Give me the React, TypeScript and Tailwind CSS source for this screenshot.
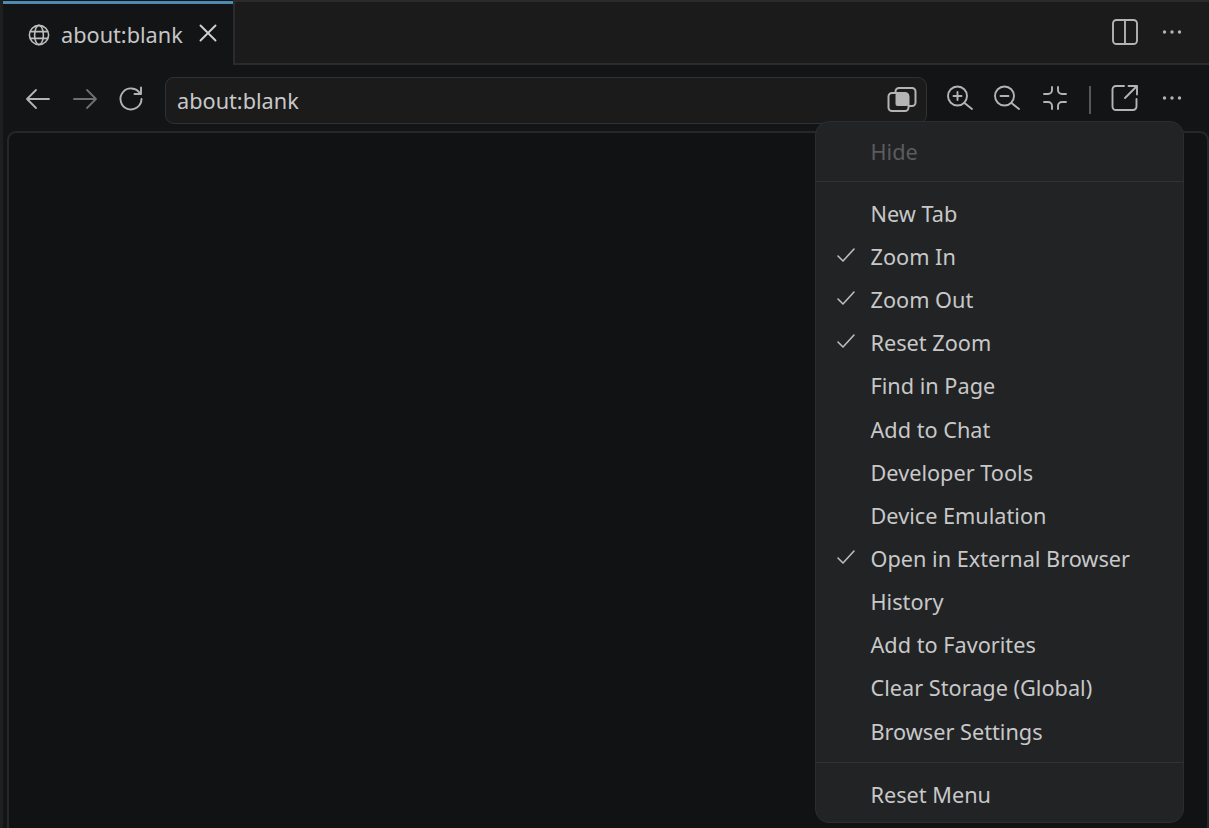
function Icon({ children, className = "" }: { children: React.ReactNode; className?: string }) {
  return (
    <svg viewBox="0 0 32 32" fill="none" stroke="currentColor" strokeWidth="1.9" strokeLinecap="round" strokeLinejoin="round" className={"w-8 h-8 shrink-0 " + className}>
      {children}
    </svg>
  );
}
function Dots({ className = "" }: { className?: string }) {
  return (
    <svg viewBox="0 0 32 32" fill="currentColor" className={"w-8 h-8 shrink-0 text-[#b4b4b4] " + className}>
      <circle cx="8.500" cy="16" r="1.700" />
      <circle cx="16" cy="16" r="1.700" />
      <circle cx="23.500" cy="16" r="1.700" />
    </svg>
  );
}
function Check() {
  return (
    <svg viewBox="0 0 20 16" fill="none" stroke="#bdbdbd" strokeWidth="1.600" strokeLinecap="round" strokeLinejoin="round" className="w-5 h-4 shrink-0 -mt-1">
      <path d="M2 9l5 5L18 2" />
    </svg>
  );
}
function Row({ label, checked }: { label: string; checked?: boolean }) {
  return (
    <div className="flex items-center h-[43.17px] pl-5">
      <div className="w-[34.5px] flex items-center">{checked ? <Check /> : null}</div>
      <span>{label}</span>
    </div>
  );
}
const items: [string, boolean][] = [
  ["New Tab", false],
  ["Zoom In", true],
  ["Zoom Out", true],
  ["Reset Zoom", true],
  ["Find in Page", false],
  ["Add to Chat", false],
  ["Developer Tools", false],
  ["Device Emulation", false],
  ["Open in External Browser", true],
  ["History", false],
  ["Add to Favorites", false],
  ["Clear Storage (Global)", false],
  ["Browser Settings", false],
];
export default function App() {
  return (
    <div className="relative w-[1209px] h-[828px] overflow-hidden bg-[#131415] text-[#c8c8c8] text-[21.7px] font-['Noto_Sans','Open_Sans',sans-serif] leading-none flex flex-col pl-[3px]">
      <div className="absolute left-0 top-0 bottom-0 w-[3px] bg-[#1e1f20]" />
      <div className="h-[65px] flex shrink-0">
        <div className="w-[230px] h-[64px] mt-[1px] border-t-[3px] border-t-[#4f8ab3] bg-[#131415] flex items-center pl-[24.5px] shrink-0">
          <svg viewBox="0 0 22 22" fill="none" stroke="#bebebe" strokeWidth="1.600" className="w-[22px] h-[22px] shrink-0">
            <circle cx="11" cy="11" r="9.600" />
            <ellipse cx="11" cy="11" rx="4.400" ry="9.600" />
            <path d="M2 7.600h18M2 14.400h18" />
          </svg>
          <span className="ml-[11.5px] mt-[1px] text-[#c6c6c6]">about:blank</span>
          <svg viewBox="0 0 18 18" fill="none" stroke="#d0d0d0" strokeWidth="1.900" strokeLinecap="round" className="w-[18px] h-[18px] ml-[16px] -mt-1">
            <path d="M1.500 1.500l15 15M16.500 1.500l-15 15" />
          </svg>
        </div>
        <div className="flex-1 bg-[#1b1b1c] border-t-[2px] border-t-[#2a2b2c] border-l-[2px] border-l-[#2a2b2c] border-b-[2px] border-b-[#2a2b2c] flex items-center justify-end pr-[21px] gap-[15px]">
          <Icon className="text-[#b4b4b4] -mt-0.5">
            <rect x="4" y="4" width="24" height="24" rx="3.500" />
            <path d="M16 4v24" />
          </Icon>
          <Dots className="-mt-0.5" />
        </div>
      </div>
      <div className="h-[66px] flex items-center shrink-0 pl-[19px] pr-[20px] pt-[4px]">
        <Icon className="text-[#b4b4b4] -mt-1">
          <path d="M5 17h22M14 8l-9 9 9 9" strokeWidth="1.800" />
        </Icon>
        <Icon className="text-[#6f6f6f] ml-[15px] -mt-1">
          <path d="M5 17h22M18 8l9 9-9 9" strokeWidth="1.800" />
        </Icon>
        <Icon className="text-[#b4b4b4] ml-[15px] -mt-1">
          <path d="M24 11.500A10.500 10.500 0 1 0 25.500 17" />
          <path d="M25 5.500v6.500h-6.500" />
        </Icon>
        <div className="ml-[17px] w-[762px] h-[47px] rounded-[9px] border border-[#303132] bg-[#1b1b1c] flex items-center pl-[11px] pr-[8px] justify-between">
          <span className="text-[#c8c8c8] mt-[1px]">about:blank</span>
          <svg viewBox="0 0 32 32" fill="none" stroke="#b4b4b4" strokeWidth="2" className="w-8 h-8 -mt-0.5">
            <rect x="9.500" y="5" width="20" height="18" rx="3.500" />
            <rect x="2.500" y="10" width="20" height="18" rx="3.500" fill="#1b1b1c" />
            <rect x="9.500" y="10" width="13" height="13" rx="2" fill="#b4b4b4" stroke="none" />
          </svg>
        </div>
        <Icon className="text-[#b4b4b4] ml-[17px] -mt-1">
          <circle cx="13.500" cy="14" r="9.500" />
          <path d="M20.500 21L28 27M13.500 10v8M9.500 14h8" />
        </Icon>
        <Icon className="text-[#b4b4b4] ml-[15px] -mt-1">
          <circle cx="13.500" cy="14" r="9.500" />
          <path d="M20.500 21L28 27M9.500 14h8" />
        </Icon>
        <Icon className="text-[#b4b4b4] ml-[16px] -mt-1">
          <path d="M13 5v3a4 4 0 0 1-4 4H5M19 5v3a4 4 0 0 0 4 4h4M13 27v-3a4 4 0 0 0-4-4H5M19 27v-3a4 4 0 0 1 4-4h4" />
        </Icon>
        <div className="w-[2px] h-[28px] bg-[#585858] ml-[18px]" />
        <Icon className="text-[#b4b4b4] ml-[18px] -mt-1">
          <path d="M15 4H7a3.500 3.500 0 0 0-3.500 3.500v17A3.500 3.500 0 0 0 7 28h17a3.500 3.500 0 0 0 3.500-3.500V17" />
          <path d="M16 16L28 4M19.500 4H28v8.500" />
        </Icon>
        <div className="ml-[15px] -mt-1"><Dots /></div>
      </div>
      <div className="flex-1 ml-[4px] rounded-t-[9px] border-t-[2px] border-x-[2px] border-[#262728] bg-[#111213]" />
      <div className="absolute left-[815px] top-[121px] w-[369px] h-[702px] rounded-[14px] border border-[#2c2d2e] bg-[#212325] flex flex-col text-[#c8c8c8]">
        <div className="h-[60px] flex items-center pl-[54.5px] text-[#5b5c5d] border-b border-[#313233] shrink-0">Hide</div>
        <div className="pt-[10px] pb-[9px] border-b border-[#313233]">
          {items.map(([l, c]) => (
            <Row key={l} label={l} checked={c} />
          ))}
        </div>
        <div className="flex-1 flex items-center pl-[54.5px] mt-[5px]">Reset Menu</div>
      </div>
    </div>
  );
}
